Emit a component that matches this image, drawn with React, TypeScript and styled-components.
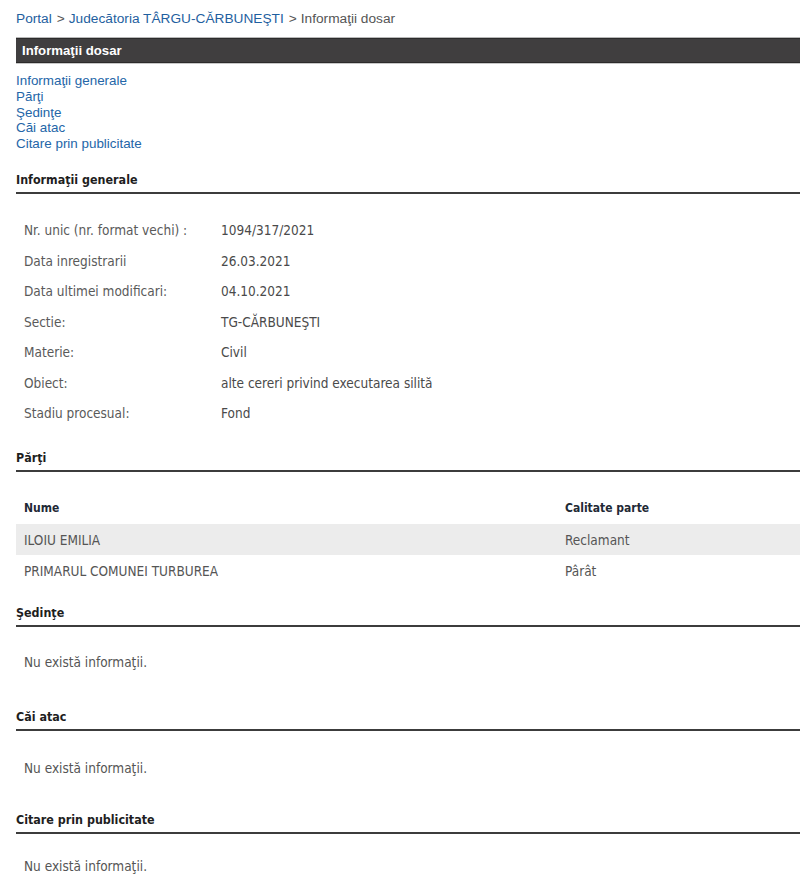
import React from 'react';
import styled, { createGlobalStyle } from 'styled-components';

const GlobalStyle = createGlobalStyle`
  html, body {
    margin: 0;
    padding: 0;
    background: #fff;
    overflow-x: hidden;
  }
  body {
    font-family: 'Liberation Sans', Arial, sans-serif;
  }
`;

const Page = styled.div`
  padding: 0 0 30px 16px;
`;

const Breadcrumb = styled.div`
  height: 37px;
  padding-top: 11px;
  box-sizing: border-box;
  font-size: 13.7px;
  color: #555;
  a {
    color: #1f5fa0;
    text-decoration: none;
  }
  span {
    margin: 0 4px 0 5px;
  }
`;

const TitleBar = styled.div`
  height: 25px;
  background: #403e3f;
  border-top: 1px solid #b8b8b8;
  border-bottom: 1px solid #c8c8c8;
  box-shadow: inset 0 1px 0 #2c2b2b, inset 0 -1px 0 #2c2b2b;
  color: #fff;
  font-weight: bold;
  font-size: 13.2px;
  line-height: 25px;
  padding-left: 6px;
`;

const NavList = styled.div`
  display: flex;
  flex-direction: column;
  padding-top: 9px;
  a {
    color: #2466a8;
    text-decoration: none;
    font-size: 13.4px;
    line-height: 15.75px;
  }
`;

const Section = styled.section<{ $top: number }>`
  margin-top: ${p => p.$top}px;
`;

const SectionTitle = styled.div`
  font-family: 'DejaVu Sans', Tahoma, sans-serif;
  font-stretch: semi-condensed;
  font-weight: bold;
  font-size: 12.4px;
  color: #1e1e1e;
  line-height: 16px;
  padding-bottom: 4px;
  border-bottom: 2px solid #3c3c3c;
`;

const Body = styled.div`
  font-family: 'DejaVu Sans', Tahoma, sans-serif;
  font-stretch: semi-condensed;
  font-size: 13.5px;
  color: #555;
`;

const InfoTable = styled(Body)`
  padding: 21px 0 0 8px;
  display: grid;
  grid-template-columns: 197px 1fr;
  grid-auto-rows: 30.5px;
  align-items: center;
`;

const InfoLabel = styled.div`
  color: #5a5a5a;
`;

const InfoValue = styled.div`
  color: #4a4a4a;
`;

const PartiesTable = styled(Body)`
  padding-top: 19px;
`;

const PartyRow = styled.div<{ $head?: boolean; $shaded?: boolean }>`
  display: grid;
  grid-template-columns: 541px 1fr;
  height: ${p => (p.$head ? 33 : 31)}px;
  align-items: center;
  padding-left: 8px;
  background: ${p => (p.$shaded ? '#ececec' : 'transparent')};
  font-weight: ${p => (p.$head ? 'bold' : 'normal')};
  font-size: ${p => (p.$head ? '12px' : 'inherit')};
  color: ${p => (p.$head ? '#1f2a36' : '#555')};
`;

const Empty = styled(Body)<{ $top: number }>`
  padding: ${p => p.$top}px 0 0 8px;
  line-height: 16px;
`;

const generalInfo: [string, string][] = [
  ['Nr. unic (nr. format vechi) :', '1094/317/2021'],
  ['Data inregistrarii', '26.03.2021'],
  ['Data ultimei modificari:', '04.10.2021'],
  ['Sectie:', 'TG-CĂRBUNEŞTI'],
  ['Materie:', 'Civil'],
  ['Obiect:', 'alte cereri privind executarea silită'],
  ['Stadiu procesual:', 'Fond'],
];

const parties: [string, string][] = [
  ['ILOIU EMILIA', 'Reclamant'],
  ['PRIMARUL COMUNEI TURBUREA', 'Pârât'],
];

const navLinks = ['Informaţii generale', 'Părţi', 'Şedinţe', 'Căi atac', 'Citare prin publicitate'];

const App: React.FC = () => {
  return (
    <Page>
      <GlobalStyle />
      <Breadcrumb>
        <a href="#">Portal</a>
        <span>&gt;</span>
        <a href="#">Judecătoria TÂRGU-CĂRBUNEŞTI</a>
        <span>&gt;</span>
        Informaţii dosar
      </Breadcrumb>
      <TitleBar>Informaţii dosar</TitleBar>
      <NavList>
        {navLinks.map(l => (
          <a key={l} href="#">
            {l}
          </a>
        ))}
      </NavList>

      <Section $top={20}>
        <SectionTitle>Informaţii generale</SectionTitle>
        <InfoTable>
          {generalInfo.map(([label, value]) => (
            <React.Fragment key={label}>
              <InfoLabel>{label}</InfoLabel>
              <InfoValue>{value}</InfoValue>
            </React.Fragment>
          ))}
        </InfoTable>
      </Section>

      <Section $top={22}>
        <SectionTitle>Părţi</SectionTitle>
        <PartiesTable>
          <PartyRow $head>
            <div>Nume</div>
            <div>Calitate parte</div>
          </PartyRow>
          {parties.map(([name, role], i) => (
            <PartyRow key={name} $shaded={i % 2 === 0}>
              <div>{name}</div>
              <div>{role}</div>
            </PartyRow>
          ))}
        </PartiesTable>
      </Section>

      <Section $top={19}>
        <SectionTitle>Şedinţe</SectionTitle>
        <Empty $top={27}>Nu există informaţii.</Empty>
      </Section>

      <Section $top={39}>
        <SectionTitle>Căi atac</SectionTitle>
        <Empty $top={29}>Nu există informaţii.</Empty>
      </Section>

      <Section $top={36}>
        <SectionTitle>Citare prin publicitate</SectionTitle>
        <Empty $top={24}>Nu există informaţii.</Empty>
      </Section>
    </Page>
  );
};

export default App;
